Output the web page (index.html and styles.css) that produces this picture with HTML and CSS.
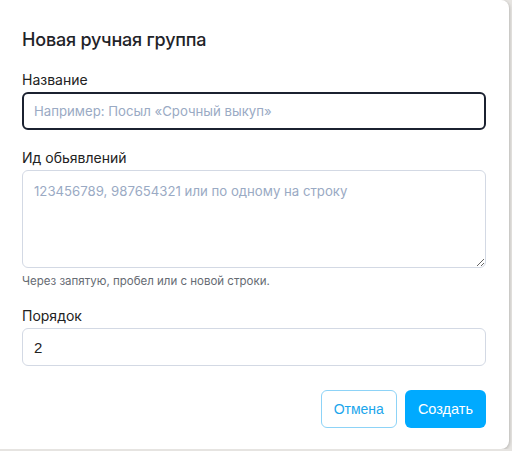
FILE: index.html
```html
<!DOCTYPE html>
<html lang="ru">
<head>
    <meta charset="UTF-8">
    <meta name="viewport" content="width=device-width, initial-scale=1.0">
    <title>Новая ручная группа</title>
    <link rel="stylesheet" href="styles.css">
</head>
<body>
    <div class="modal">
        <h2 class="modal-title">Новая ручная группа</h2>

        <form id="group-form">
            <div class="field">
                <label for="name">Название</label>
                <input type="text" id="name" class="input input-focus" placeholder="Например: Посыл «Срочный выкуп»">
            </div>

            <div class="field">
                <label for="ids">Ид обьявлений</label>
                <textarea id="ids" class="input textarea" placeholder="123456789, 987654321 или по одному на строку"></textarea>
                <p class="hint">Через запятую, пробел или с новой строки.</p>
            </div>

            <div class="field">
                <label for="order">Порядок</label>
                <input type="number" id="order" class="input input-number" value="2">
            </div>

            <div class="actions">
                <button type="button" class="btn btn-outline">Отмена</button>
                <button type="submit" class="btn btn-primary">Создать</button>
            </div>
        </form>
    </div>
</body>
</html>
```

FILE: styles.css
```css
body {
    margin: 0;
    padding: 0;
    background-color: #e6e4e1;
    font-family: Inter, "Noto Sans", sans-serif;
    color: #1f2328;
}

.modal {
    width: 509px;
    height: 449px;
    box-sizing: border-box;
    padding: 22px 23px 0 22px;
    background-color: #fff;
    border-radius: 0 8px 8px 0;
    box-shadow: 1px 1px 3px rgba(0, 0, 0, 0.18);
}

.modal-title {
    margin: 6px 0 19px;
    font-size: 18px;
    line-height: 24px;
    font-weight: 500;
    letter-spacing: -0.2px;
}

.field {
    margin-bottom: 19px;
}

.field label {
    display: block;
    font-size: 14px;
    line-height: 18px;
    margin-bottom: 3px;
    color: #222;
}

.input {
    display: block;
    width: 100%;
    box-sizing: border-box;
    height: 38px;
    padding: 0 11px;
    font-family: Inter, "Noto Sans", sans-serif;
    font-size: 13.2px;
    color: #222;
    border: 1px solid #d3d9e4;
    border-radius: 6px;
    background: #fff;
    outline: none;
}

.input::placeholder {
    color: #9aaac4;
}

.input-focus {
    border: 2px solid #1b2130;
    height: 38px;
    padding-left: 10px;
}

.textarea {
    height: 98px;
    padding-top: 10px;
    resize: vertical;
    line-height: 20px;
}

.input-number {
    font-family: "Liberation Sans", Arial, sans-serif;
    font-size: 15px;
    -moz-appearance: textfield;
}

.input-number::-webkit-inner-spin-button,
.input-number::-webkit-outer-spin-button {
    -webkit-appearance: none;
    margin: 0;
}

.hint {
    margin: 6px 0 0;
    font-size: 11.5px;
    line-height: 14px;
    color: #666b73;
}

.actions {
    display: flex;
    justify-content: flex-end;
    gap: 8px;
    margin-top: 24px;
}

.btn {
    height: 38px;
    padding: 0 12px;
    font-family: "Liberation Sans", Arial, sans-serif;
    font-size: 14px;
    border-radius: 6px;
    cursor: pointer;
}

.btn-outline {
    background: #fff;
    color: #1ba6ec;
    border: 1px solid #8dd3f7;
}

.btn-primary {
    background: #00aaff;
    color: #fff;
    border: none;
    padding: 0 13px;
    font-size: 14.5px;
}
```
